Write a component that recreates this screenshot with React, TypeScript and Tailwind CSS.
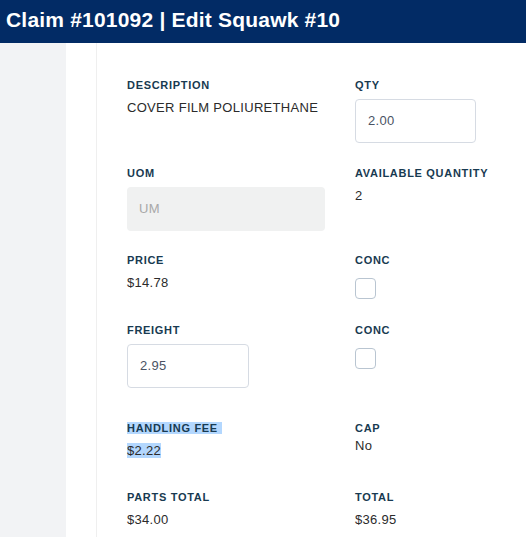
import React from "react"

const font = { fontFamily: '"Liberation Sans", Arial, Helvetica, sans-serif' }

function Label({ children, selected }: { children: React.ReactNode; selected?: boolean }) {
  return (
    <div className="text-[11px] leading-4 font-bold tracking-[0.7px] text-[#183a51] uppercase">
      {selected ? <span className="bg-[#b3d7fe]">{children}&nbsp;</span> : children}
    </div>
  )
}

function Value({ children, selected, className = "mt-[5px]" }: { children: React.ReactNode; selected?: boolean; className?: string }) {
  return (
    <div className={`text-[13px] leading-5 tracking-[0.3px] text-[#2b2b2b] ${className}`}>
      {selected ? <span className="bg-[#b3d7fe]">{children}</span> : children}
    </div>
  )
}

function TextInput({ value, width }: { value: string; width: string }) {
  return (
    <div
      className={`mt-1.5 h-11 ${width} rounded-[4px] border border-[#d6dbe3] bg-white px-3 flex items-center text-[13px] tracking-[0.3px] text-[#4a5364]`}
    >
      {value}
    </div>
  )
}

function Checkbox() {
  return <div className="mt-2.5 w-[21px] h-[21px] rounded-[4px] border border-[#b9c5d1] bg-white" />
}

export default function App() {
  return (
    <div className="h-screen overflow-hidden flex flex-col bg-white" style={font}>
      {/* Header */}
      <div className="h-[43px] shrink-0 bg-[#022b65] flex items-center pl-[6px] pb-[3px]">
        <h1 className="text-[21px] tracking-[0.2px] font-bold text-white">Claim #101092 | Edit Squawk #10</h1>
      </div>

      <div className="flex flex-1">
        {/* Sidebar */}
        <div className="w-[66px] shrink-0 bg-[#f2f3f5]" />

        {/* Main */}
        <div className="flex-1 pl-[30px]">
          <div className="h-full border-l border-[#efefef] pl-[30px] pt-[34px]">
            <div className="grid grid-cols-[228px_1fr]">
              <div>
                <Label>Description</Label>
                <Value>COVER FILM POLIURETHANE</Value>
              </div>
              <div>
                <Label>Qty</Label>
                <TextInput value="2.00" width="w-[121px]" />
              </div>
            </div>

            <div className="grid grid-cols-[228px_1fr] mt-[22px]">
              <div>
                <Label>UOM</Label>
                <div className="mt-1.5 h-11 w-[198px] rounded-[4px] bg-[#f0f1f1] px-3 flex items-center text-[13px] tracking-[0.3px] text-[#a8a8a8]">
                  UM
                </div>
              </div>
              <div>
                <Label>Available Quantity</Label>
                <Value>2</Value>
              </div>
            </div>

            <div className="grid grid-cols-[228px_1fr] mt-[21px]">
              <div>
                <Label>Price</Label>
                <Value>$14.78</Value>
              </div>
              <div>
                <Label>Conc</Label>
                <Checkbox />
              </div>
            </div>

            <div className="grid grid-cols-[228px_1fr] mt-[23px]">
              <div>
                <Label>Freight</Label>
                <TextInput value="2.95" width="w-[122px]" />
              </div>
              <div>
                <Label>Conc</Label>
                <Checkbox />
              </div>
            </div>

            <div className="grid grid-cols-[228px_1fr] mt-[32px]">
              <div>
                <Label selected>Handling Fee</Label>
                <Value selected>$2.22</Value>
              </div>
              <div>
                <Label>Cap</Label>
                <Value className="mt-0">No</Value>
              </div>
            </div>

            <div className="grid grid-cols-[228px_1fr] mt-[28px]">
              <div>
                <Label>Parts Total</Label>
                <Value>$34.00</Value>
              </div>
              <div>
                <Label>Total</Label>
                <Value>$36.95</Value>
              </div>
            </div>
          </div>
        </div>
      </div>
    </div>
  )
}
